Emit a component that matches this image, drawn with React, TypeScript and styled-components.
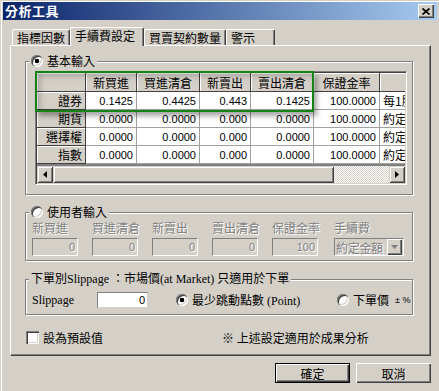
import React from 'react';
import styled, { createGlobalStyle } from 'styled-components';

const CJK = `"Noto Sans CJK TC", "Noto Sans CJK SC", sans-serif`;
const SANS = `"Liberation Sans", Arial, sans-serif`;
const SERIF_MIX = `"Liberation Serif", "Noto Sans CJK TC", serif`;

const GlobalStyle = createGlobalStyle`
  html, body { margin: 0; padding: 0; background: #D4D0C8; }
  body { font-family: ${CJK}; font-size: 12px; color: #000; }
  * { box-sizing: border-box; }
`;

const Window = styled.div`
  width: 439px;
  height: 391px;
  overflow: hidden;
  background: #D4D0C8;
  padding: 2px 2px 0 3px;
  box-shadow: inset 1px 1px 0 #D4D0C8, inset 2px 2px 0 #fff;
  display: flex;
  flex-direction: column;
`;

const TitleBar = styled.div`
  height: 18px;
  flex: none;
  display: flex;
  align-items: center;
  justify-content: space-between;
  padding: 0 3px 0 2px;
  background: linear-gradient(to right, #0a246a, #a6caf0);
`;

const Title = styled.span`
  color: #fff;
  font-weight: bold;
  font-size: 13px;
  line-height: 18px;
  letter-spacing: 0.5px;
`;

const CloseButton = styled.div`
  width: 16px;
  height: 14px;
  background: #d4d0c8;
  box-shadow: inset 1px 1px 0 #fff, inset -1px -1px 0 #404040, inset -2px -2px 0 #808080;
  display: flex;
  align-items: center;
  justify-content: center;
`;

const TabStrip = styled.div`
  display: flex;
  align-items: flex-end;
  height: 18px;
  flex: none;
  margin: 7px 0 0 9px;
  position: relative;
  z-index: 1;
`;

const Tab = styled.div<{ $w: number; $active?: boolean }>`
  width: ${(p) => p.$w}px;
  height: ${(p) => (p.$active ? 19 : 16)}px;
  margin-bottom: ${(p) => (p.$active ? -1 : 0)}px;
  padding: 1px 0 0 4px;
  background: #d4d0c8;
  border-top: 1px solid #fff;
  border-left: 1px solid #fff;
  border-right: 1px solid #404040;
  box-shadow: inset -1px 0 0 #808080;
  border-radius: 2px 2px 0 0;
  font-size: 12px;
  line-height: 14px;
  white-space: nowrap;
`;

const Panel = styled.div`
  margin-left: 7px;
  width: 421px;
  height: 311px;
  flex: none;
  border: 1px solid;
  border-color: #fff #404040 #404040 #fff;
  box-shadow: inset -1px -1px 0 #808080;
  padding: 15px 17px 0 14px;
  display: flex;
  flex-direction: column;
`;

const GroupBox = styled.div<{ $mt?: number }>`
  margin-top: ${(p) => p.$mt ?? 0}px;
  border: 1px solid #808080;
  box-shadow: inset 1px 1px 0 #fff, 1px 1px 0 #fff;
  display: flex;
  flex-direction: column;
`;

const Legend = styled.div<{ $font?: string }>`
  align-self: flex-start;
  margin: -8px 0 0 3px;
  padding: 0 2px;
  height: 14px;
  line-height: 14px;
  background: #d4d0c8;
  display: flex;
  align-items: center;
  gap: 4px;
  white-space: nowrap;
  font-family: ${(p) => p.$font ?? CJK};
  font-size: 12px;
`;

const Radio = styled.span<{ $checked?: boolean }>`
  width: 12px;
  height: 12px;
  flex: none;
  border-radius: 50%;
  background: ${(p) => (p.$checked ? 'radial-gradient(circle, #000 0 2px, #fff 2.6px)' : '#fff')};
  box-shadow: inset 1px 1px 0 #808080, inset 2px 2px 0 #404040, inset -1px -1px 0 #fff,
    inset -2px -2px 0 #d4d0c8;
`;

/* ---------- grid ---------- */

const GridFrame = styled.div`
  position: relative;
  width: 372px;
  height: 114px;
  margin: 3px 0 9px 9px;
  border: 1px solid;
  border-color: #808080 #fff #fff #808080;
  box-shadow: inset 1px 1px 0 #404040, inset -1px -1px 0 #d4d0c8;
  padding: 1px;
  background: #808080;
  display: flex;
  flex-direction: column;
`;

const GridBody = styled.div`
  flex: 1;
  overflow: hidden;
  background: #808080;
`;

const GridRow = styled.div<{ $h: number }>`
  display: grid;
  grid-template-columns: 49px 51px 63px 51px 63px 66px 60px;
  height: ${(p) => p.$h}px;
  width: 403px;
`;

const HeadCell = styled.div<{ $align?: string }>`
  display: flex;
  align-items: center;
  justify-content: ${(p) => p.$align ?? 'center'};
  padding: 0 3px;
  background: #d4d0c8;
  border-right: 1px solid #404040;
  border-bottom: 1px solid #404040;
  box-shadow: inset 1px 1px 0 #fff;
  font-family: ${CJK};
  font-size: 12px;
  white-space: nowrap;
  overflow: hidden;
`;

const DataCell = styled.div<{ $cjk?: boolean }>`
  display: flex;
  align-items: center;
  justify-content: ${(p) => (p.$cjk ? 'flex-start' : 'flex-end')};
  padding: ${(p) => (p.$cjk ? '0 0 0 3px' : '0 3px 0 0')};
  background: #fff;
  border-right: 1px solid #a0a0a0;
  border-bottom: 1px solid #a0a0a0;
  font-family: ${(p) => (p.$cjk ? CJK : SANS)};
  font-size: ${(p) => (p.$cjk ? 12 : 11)}px;
  white-space: nowrap;
  overflow: hidden;
`;

const Highlight = styled.div`
  position: absolute;
  left: -1px;
  top: -1px;
  width: 279px;
  height: 41px;
  border: 2px solid #138413;
  box-shadow: 3px 4px 5px rgba(0, 0, 0, 0.35), inset 3px 3px 6px rgba(0, 0, 0, 0.22);
  pointer-events: none;
`;

const ScrollBar = styled.div`
  height: 17px;
  flex: none;
  display: flex;
`;

const bevel = `
  background: #d4d0c8;
  box-shadow: inset 1px 1px 0 #d4d0c8, inset -1px -1px 0 #404040, inset 2px 2px 0 #fff,
    inset -2px -2px 0 #808080;
`;

const ScrollButton = styled.div`
  width: 16px;
  flex: none;
  ${bevel}
  display: flex;
  align-items: center;
  justify-content: center;
`;

const ScrollThumb = styled.div`
  width: 281px;
  flex: none;
  ${bevel}
`;

const ScrollTrack = styled.div`
  flex: 1;
  background: repeating-conic-gradient(#fff 0 25%, #d4d0c8 0 50%) 0 0 / 2px 2px;
`;

/* ---------- user input ---------- */

const FieldGrid = styled.div`
  display: grid;
  grid-template-columns: repeat(5, 46px) 72px;
  column-gap: 14px;
  row-gap: 3px;
  padding: 2px 0 4px 6px;
`;

const DisabledLabel = styled.div<{ $shift?: number }>`
  margin-left: ${(p) => p.$shift ?? 0}px;
  line-height: 14px;
  height: 14px;
  color: #808080;
  text-shadow: 1px 1px 0 #fff;
  white-space: nowrap;
  font-size: 12px;
`;

const DisabledInput = styled.div`
  height: 18px;
  border: 1px solid;
  border-color: #808080 #fff #fff #808080;
  background: #d4d0c8;
  display: flex;
  align-items: center;
  justify-content: flex-end;
  padding-right: 2px;
  font-family: ${SANS};
  font-size: 11px;
  color: #808080;
  text-shadow: 1px 1px 0 #fff;
`;

const Dropdown = styled.div`
  margin-left: 2px;
  width: 70px;
  height: 18px;
  border: 1px solid;
  border-color: #808080 #fff #fff #808080;
  background: #d4d0c8;
  display: flex;
  align-items: center;
  justify-content: space-between;
  padding: 0 1px 0 1px;
  color: #808080;
  text-shadow: 1px 1px 0 #fff;
  font-size: 12px;
  letter-spacing: -0.3px;
  white-space: nowrap;
`;

const DropButton = styled.div`
  width: 15px;
  height: 16px;
  flex: none;
  background: #d4d0c8;
  box-shadow: inset 1px 1px 0 #fff, inset -1px -1px 0 #404040, inset -2px -2px 0 #808080;
  display: flex;
  align-items: center;
  justify-content: center;
`;

/* ---------- slippage ---------- */

const SlipRow = styled.div`
  display: flex;
  align-items: center;
  height: 16px;
  margin: 6px 0 6px 6px;
`;

const SlipLabel = styled.span`
  width: 65px;
  flex: none;
  font-family: ${SERIF_MIX};
  font-size: 12px;
`;

const SlipInput = styled.div`
  width: 51px;
  height: 16px;
  flex: none;
  border: 1px solid;
  border-color: #808080 #d4d0c8 #d4d0c8 #808080;
  background: #fff;
  display: flex;
  align-items: center;
  justify-content: flex-end;
  padding-right: 2px;
  font-family: ${SANS};
  font-size: 11px;
`;

const RadioOption = styled.label<{ $w?: number; $ml?: number }>`
  display: flex;
  align-items: center;
  gap: 4px;
  margin-left: ${(p) => p.$ml ?? 0}px;
  width: ${(p) => (p.$w ? `${p.$w}px` : 'auto')};
  flex: none;
  font-family: ${SERIF_MIX};
  font-size: 12px;
  white-space: nowrap;
`;

const Tiny = styled.span`
  font-family: ${SANS};
  font-size: 9px;
  margin-left: 2px;
`;

/* ---------- footer of panel ---------- */

const NoteRow = styled.div`
  display: grid;
  grid-template-columns: 196px auto;
  align-items: center;
  margin-top: 14px;
  padding-left: 1px;
  height: 14px;
`;

const CheckLabel = styled.label`
  display: flex;
  align-items: center;
  gap: 4px;
  font-size: 12px;
`;

const CheckBox = styled.span`
  width: 13px;
  height: 13px;
  flex: none;
  background: #fff;
  box-shadow: inset 1px 1px 0 #808080, inset 2px 2px 0 #404040, inset -1px -1px 0 #fff,
    inset -2px -2px 0 #d4d0c8;
`;

const Note = styled.span`
  font-size: 12px;
  white-space: nowrap;
`;

const ButtonRow = styled.div`
  display: flex;
  justify-content: flex-end;
  gap: 6px;
  margin-top: 7px;
  padding-right: 6px;
`;

const Button = styled.div<{ $default?: boolean }>`
  width: 75px;
  height: 20px;
  display: flex;
  align-items: center;
  justify-content: center;
  background: #d4d0c8;
  border: ${(p) => (p.$default ? '1px solid #000' : 'none')};
  box-shadow: inset 1px 1px 0 #fff, inset -1px -1px 0 #404040, inset -2px -2px 0 #808080;
  font-size: 12px;
`;

const headers = ['新買進', '買進清倉', '新賣出', '賣出清倉', '保證金率', ''];
const rows = [
  { name: '證券', v: ['0.1425', '0.4425', '0.443', '0.1425', '100.0000'], unit: '每1股' },
  { name: '期貨', v: ['0.0000', '0.0000', '0.000', '0.0000', '100.0000'], unit: '約定' },
  { name: '選擇權', v: ['0.0000', '0.0000', '0.000', '0.0000', '100.0000'], unit: '約定' },
  { name: '指數', v: ['0.0000', '0.0000', '0.000', '0.0000', '100.0000'], unit: '約定' },
];
const userFields = [
  { label: '新買進', value: '0' },
  { label: '買進清倉', value: '0' },
  { label: '新賣出', value: '0' },
  { label: '賣出清倉', value: '0' },
  { label: '保證金率', value: '100' },
];

const Arrow = ({ dir, color = '#000' }: { dir: 'left' | 'right' | 'down'; color?: string }) => {
  if (dir === 'down') {
    return (
      <svg width="7" height="4" viewBox="0 0 7 4">
        <polygon points="0,0 7,0 3.5,4" fill={color} />
      </svg>
    );
  }
  return (
    <svg width="4" height="7" viewBox="0 0 4 7">
      <polygon points={dir === 'left' ? '4,0 4,7 0,3.5' : '0,0 0,7 4,3.5'} fill={color} />
    </svg>
  );
};

export default function App() {
  return (
    <>
      <GlobalStyle />
      <Window>
        <TitleBar>
          <Title>分析工具</Title>
          <CloseButton>
            <svg width="8" height="7" viewBox="0 0 8 7">
              <path d="M0.5 0.5 L7.5 6.5 M7.5 0.5 L0.5 6.5" stroke="#000" strokeWidth="1.7" />
            </svg>
          </CloseButton>
        </TitleBar>

        <TabStrip>
          <Tab $w={58}>指標因數</Tab>
          <Tab $w={74} $active>
            手續費設定
          </Tab>
          <Tab $w={82}>買賣契約數量</Tab>
          <Tab $w={49}>警示</Tab>
        </TabStrip>

        <Panel>
          <GroupBox>
            <Legend>
              <Radio $checked />
              基本輸入
            </Legend>
            <GridFrame>
              <GridBody>
                <GridRow $h={19}>
                  <HeadCell />
                  {headers.map((h, i) => (
                    <HeadCell key={i}>{h}</HeadCell>
                  ))}
                </GridRow>
                {rows.map((r) => (
                  <GridRow $h={18} key={r.name}>
                    <HeadCell $align="flex-end">{r.name}</HeadCell>
                    {r.v.map((v, i) => (
                      <DataCell key={i}>{v}</DataCell>
                    ))}
                    <DataCell $cjk>{r.unit}</DataCell>
                  </GridRow>
                ))}
              </GridBody>
              <ScrollBar>
                <ScrollButton>
                  <Arrow dir="left" />
                </ScrollButton>
                <ScrollThumb />
                <ScrollTrack />
                <ScrollButton>
                  <Arrow dir="right" />
                </ScrollButton>
              </ScrollBar>
              <Highlight />
            </GridFrame>
          </GroupBox>

          <GroupBox $mt={17}>
            <Legend>
              <Radio />
              使用者輸入
            </Legend>
            <FieldGrid>
              {userFields.map((f) => (
                <DisabledLabel key={f.label}>{f.label}</DisabledLabel>
              ))}
              <DisabledLabel $shift={2}>手續費</DisabledLabel>
              {userFields.map((f) => (
                <DisabledInput key={f.label}>{f.value}</DisabledInput>
              ))}
              <Dropdown>
                約定金額
                <DropButton>
                  <Arrow dir="down" color="#808080" />
                </DropButton>
              </Dropdown>
            </FieldGrid>
          </GroupBox>

          <GroupBox $mt={18}>
            <Legend $font={SERIF_MIX}>下單別Slippage ：市場價(at Market) 只適用於下單</Legend>
            <SlipRow>
              <SlipLabel>Slippage</SlipLabel>
              <SlipInput>0</SlipInput>
              <RadioOption $w={161} $ml={28}>
                <Radio $checked />
                最少跳動點數 (Point)
              </RadioOption>
              <RadioOption>
                <Radio />
                下單價<Tiny>± %</Tiny>
              </RadioOption>
            </SlipRow>
          </GroupBox>

          <NoteRow>
            <CheckLabel>
              <CheckBox />
              設為預設值
            </CheckLabel>
            <Note>※ 上述設定適用於成果分析</Note>
          </NoteRow>
        </Panel>

        <ButtonRow>
          <Button $default>確定</Button>
          <Button>取消</Button>
        </ButtonRow>
      </Window>
    </>
  );
}
